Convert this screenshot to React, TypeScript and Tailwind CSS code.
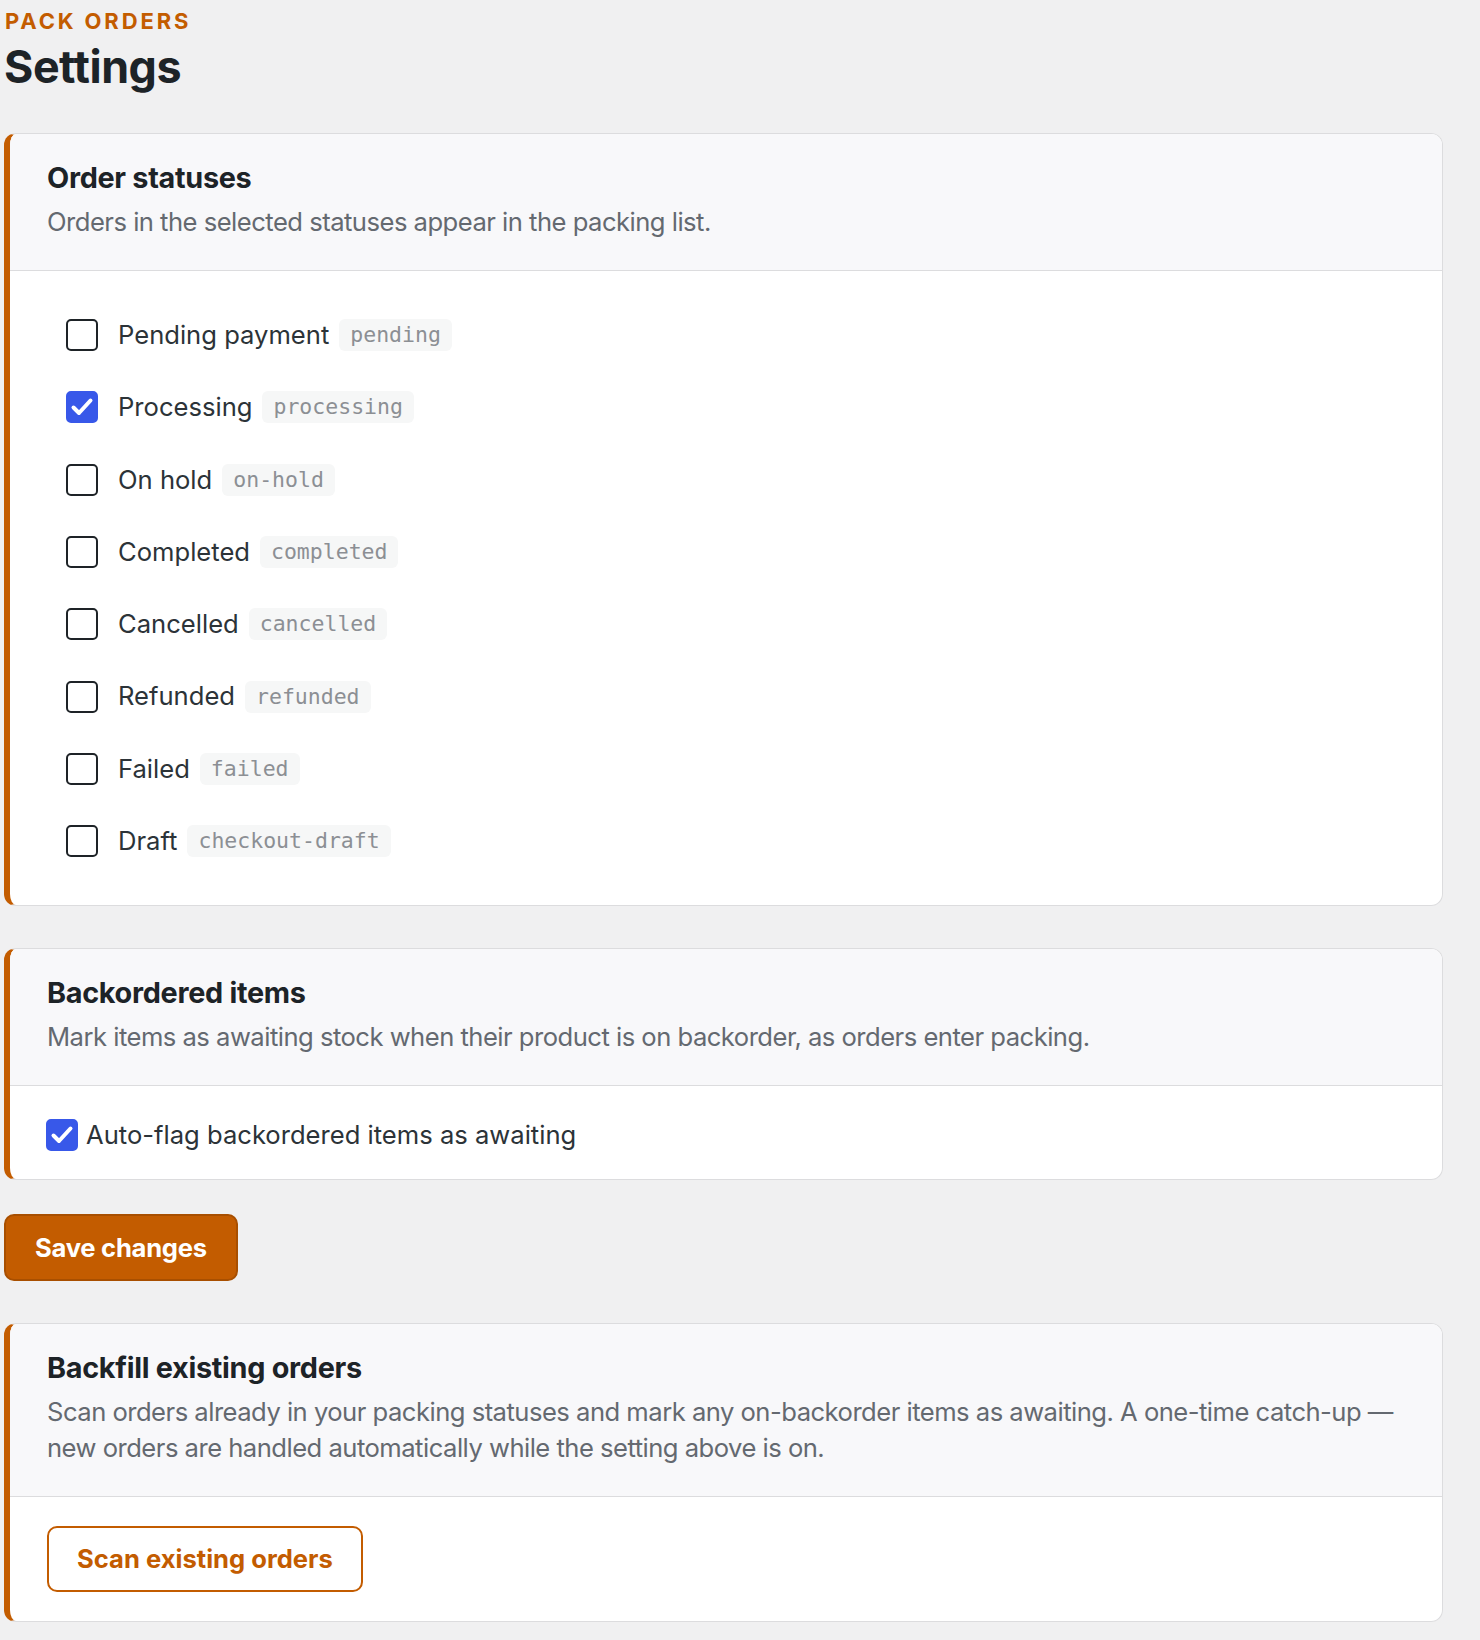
import { useState } from "react"

const STATUSES = [
  { label: "Pending payment", slug: "pending" },
  { label: "Processing", slug: "processing" },
  { label: "On hold", slug: "on-hold" },
  { label: "Completed", slug: "completed" },
  { label: "Cancelled", slug: "cancelled" },
  { label: "Refunded", slug: "refunded" },
  { label: "Failed", slug: "failed" },
  { label: "Draft", slug: "checkout-draft" },
]

function Checkbox({ checked, onChange }: { checked: boolean; onChange: () => void }) {
  return (
    <button
      type="button"
      role="checkbox"
      aria-checked={checked}
      onClick={onChange}
      className={
        checked
          ? "flex h-[32px] w-[32px] shrink-0 items-center justify-center rounded-[5px] border-2 border-[#3858e9] bg-[#3858e9]"
          : "flex h-[32px] w-[32px] shrink-0 items-center justify-center rounded-[5px] border-2 border-[#1e2327] bg-white"
      }
    >
      {checked && (
        <svg viewBox="0 0 28 28" className="h-[28px] w-[28px]" fill="none">
          <path d="M5.5 14.5l5.5 5.5L22.5 7.5" stroke="white" strokeWidth="4" strokeLinecap="round" strokeLinejoin="round" />
        </svg>
      )}
    </button>
  )
}

function Card({ title, children, description }: { title: string; description: React.ReactNode; children: React.ReactNode }) {
  return (
    <section className="ml-[4px] w-[1439px] overflow-hidden rounded-[12px] border border-l-[6px] border-[#dcdcde] border-l-[#c35c00] bg-white">
      {/* Header */}
      <div className="border-b border-[#dcdcde] bg-[#f8f8fa] pb-[30px] pl-[37px] pr-[37px] pt-[26px]">
        <h2 className="text-[28.8px] font-bold leading-[36px] tracking-[-0.01em] text-[#1d2327]">{title}</h2>
        <p className="mt-[8px] text-[25.6px] leading-[36px] tracking-[-0.02em] text-[#646970]">{description}</p>
      </div>
      {children}
    </section>
  )
}

export default function App() {
  const [selected, setSelected] = useState<string[]>(["processing"])
  const [autoFlag, setAutoFlag] = useState(true)

  const toggle = (slug: string) =>
    setSelected((prev) => (prev.includes(slug) ? prev.filter((s) => s !== slug) : [...prev, slug]))

  return (
    <div className="min-h-[1640px] bg-[#f0f0f1] pb-[18px] pt-[7px] font-['Inter',sans-serif]">
      <p className="pl-[5px] text-[22px] font-bold uppercase leading-[28px] tracking-[0.13em] text-[#c35c00]">Pack orders</p>
      <h1 className="mt-[6px] pl-[4px] text-[44.8px] font-bold leading-[52px] tracking-[-0.01em] text-[#1d2327]">Settings</h1>

      <div className="mt-[40px]">
        <Card title="Order statuses" description="Orders in the selected statuses appear in the packing list.">
          <ul className="py-[28px] pl-[56px]">
            {STATUSES.map((s) => (
              <li key={s.slug} className="flex h-[72.3px] items-center">
                <Checkbox checked={selected.includes(s.slug)} onChange={() => toggle(s.slug)} />
                <span className="ml-[20px] text-[25.6px] text-[#2c3338]">{s.label}</span>
                <code className="ml-[10px] flex h-[32px] items-center rounded-[6px] bg-[#f6f7f7] px-[11px] font-['DejaVu_Sans_Mono',monospace] text-[21.5px] text-[#8c8f94]">
                  {s.slug}
                </code>
              </li>
            ))}
          </ul>
        </Card>
      </div>

      <div className="mt-[42px]">
        <Card
          title="Backordered items"
          description="Mark items as awaiting stock when their product is on backorder, as orders enter packing."
        >
          <div className="box-content flex h-[32px] items-center gap-[8px] pb-[28px] pl-[36px] pt-[33px]">
            <Checkbox checked={autoFlag} onChange={() => setAutoFlag(!autoFlag)} />
            <span className="text-[25.6px] leading-[32px] text-[#2c3338]">Auto-flag backordered items as awaiting</span>
          </div>
        </Card>
      </div>

      <button
        type="button"
        className="ml-[4px] mt-[34px] flex h-[67px] items-center rounded-[10px] border-2 border-[#a84f00] bg-[#c35c00] px-[29px] text-[25.6px] font-bold tracking-[-0.01em] text-white"
      >
        Save changes
      </button>

      <div className="mt-[42px]">
        <Card
          title="Backfill existing orders"
          description={
            <>
              Scan orders already in your packing statuses and mark any on-backorder items as awaiting. A one-time{" "}
              <span className="whitespace-nowrap">catch-up —</span> new orders are handled automatically while the
              setting above is on.
            </>
          }
        >
          <div className="py-[29px] pl-[37px]">
            <button
              type="button"
              className="flex h-[66px] items-center rounded-[10px] border-2 border-[#c35c00] bg-white px-[28px] text-[25.6px] font-bold text-[#c35c00]"
            >
              Scan existing orders
            </button>
          </div>
        </Card>
      </div>
    </div>
  )
}
